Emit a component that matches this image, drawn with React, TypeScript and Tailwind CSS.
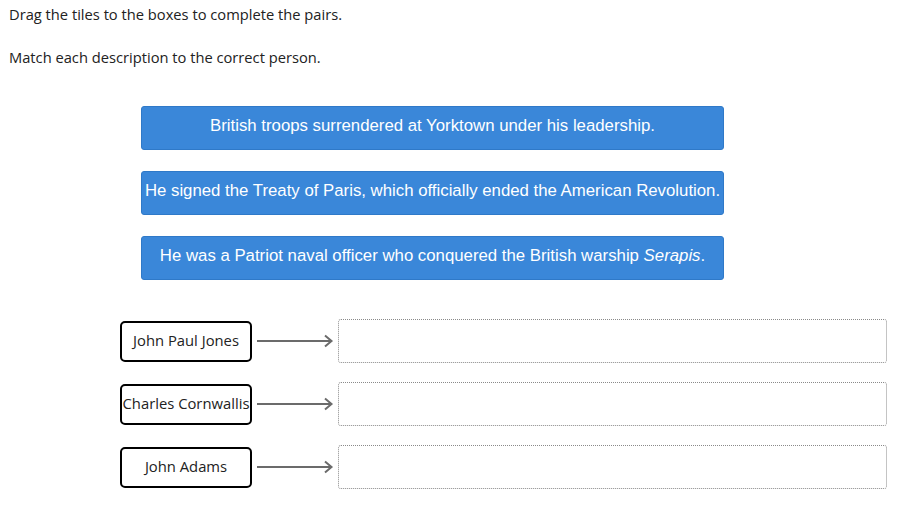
const TILES = [
  <>British troops surrendered at Yorktown under his leadership.</>,
  <>He signed the Treaty of Paris, which officially ended the American Revolution.</>,
  <>
    He was a Patriot naval officer who conquered the British warship <i>Serapis</i>.
  </>,
];

const NAMES = ["John Paul Jones", "Charles Cornwallis", "John Adams"];

function Arrow() {
  return (
    <svg width="81" height="14" viewBox="0 0 81 14" className="shrink-0">
      <line x1="0" y1="7" x2="74" y2="7" stroke="#6b6b6b" strokeWidth="2" />
      <polyline points="68,1.5 74.5,7 68,12.5" fill="none" stroke="#6b6b6b" strokeWidth="2" />
    </svg>
  );
}

export default function App() {
  return (
    <div className="min-h-[513px] bg-white px-[9px] pt-[4px] text-[14.7px] text-[#222] font-['Open_Sans',sans-serif]">
      <p className="leading-[20px]">Drag the tiles to the boxes to complete the pairs.</p>
      <p className="mt-[23px] leading-[20px]">Match each description to the correct person.</p>

      <div className="ml-[132px] mt-[39px] flex w-[583px] flex-col gap-[21px]">
        {TILES.map((t, i) => (
          <div
            key={i}
            className="h-[44px] rounded-[3px] border border-[#2f79c8] bg-[#3a87d9] pt-[8px] text-center text-[16.8px] leading-[22px] text-white font-['Liberation_Sans',Arial,sans-serif] whitespace-nowrap"
          >
            <span>{t}</span>
          </div>
        ))}
      </div>

      <div className="ml-[111px] mt-[39px] flex flex-col gap-[19px]">
        {NAMES.map((n) => (
          <div key={n} className="flex items-center">
            <div className="flex h-[41px] w-[132px] items-center justify-center rounded-[5px] border-2 border-black pb-[1px] text-[14.8px] text-[#222] whitespace-nowrap">
              {n}
            </div>
            <div className="ml-[5px]">
              <Arrow />
            </div>
            <div className="h-[44px] w-[549px] rounded-[3px] border border-dotted border-[#8a8a8a]" />
          </div>
        ))}
      </div>
    </div>
  );
}
